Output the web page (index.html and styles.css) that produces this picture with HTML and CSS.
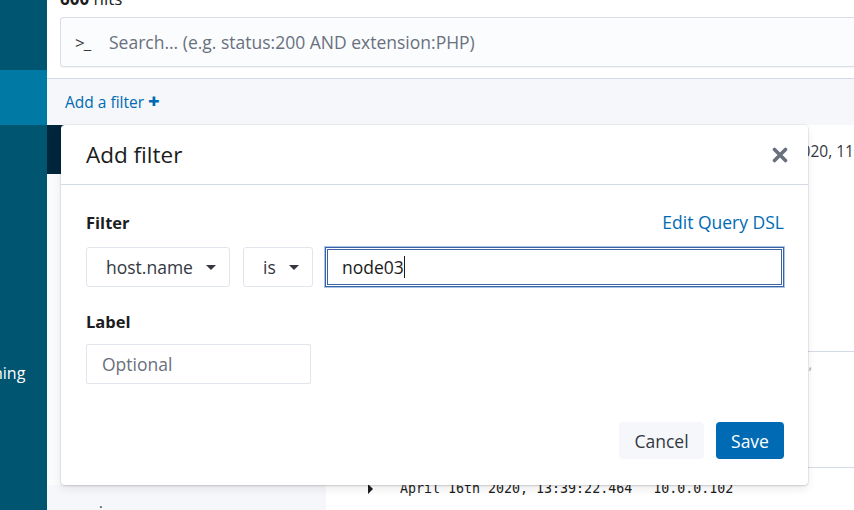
FILE: index.html
```html
<!DOCTYPE html>
<html lang="en">
<head>
<meta charset="utf-8">
<title>Discover - Add filter</title>
<link rel="stylesheet" href="styles.css">
</head>
<body>
<div class="app">
  <nav class="sidebar">
    <div class="nav-top"></div>
    <div class="nav-active"></div>
    <div class="nav-rest"><span class="nav-label">ning</span></div>
  </nav>
  <main class="main">
    <div class="hits"><b>600</b> hits</div>
    <div class="query-row">
      <div class="search">
        <span class="prompt">&gt;_</span>
        <span class="placeholder">Search... (e.g. status:200 AND extension:PHP)</span>
      </div>
    </div>
    <div class="filter-bar">
      <span class="add-filter">Add a filter <span class="plus">+</span></span>
    </div>
    <div class="content">
      <aside class="fields">
        <div class="index-header"></div>
        <div class="fields-body"></div>
        <div class="fields-bottom"><span class="dot">·</span></div>
      </aside>
      <section class="docs">
        <div class="doc-head"><span class="range">April 16th 2020, 11:</span></div>
        <div class="doc-chart"></div>
        <div class="doc-row row-a"><span class="tick">,</span></div>
        <div class="doc-row row-b">
          <span class="caret"></span>
          <span class="mono">April 16th 2020, 13:39:22.464</span>
          <span class="mono">10.0.0.102</span>
        </div>
      </section>
    </div>

    <div class="modal">
      <header class="modal-head">
        <h2 class="modal-title">Add filter</h2>
        <span class="close">
          <svg width="16" height="16" viewBox="0 0 16 16"><path d="M2.5 2.5 L13.5 13.5 M13.5 2.5 L2.5 13.5" stroke="#69707d" stroke-width="3.6" stroke-linecap="round"/></svg>
        </span>
      </header>
      <div class="modal-body">
        <div class="label-row">
          <span class="form-label">Filter</span>
          <span class="link">Edit Query DSL</span>
        </div>
        <div class="controls">
          <div class="select sel-field"><span>host.name</span><span class="tri"></span></div>
          <div class="select sel-op"><span>is</span><span class="tri"></span></div>
          <div class="value-input"><span>node03</span><span class="cursor"></span></div>
        </div>
        <div class="label-row second">
          <span class="form-label">Label</span>
        </div>
        <div class="optional">Optional</div>
        <div class="footer">
          <button class="btn cancel">Cancel</button>
          <button class="btn save">Save</button>
        </div>
      </div>
    </div>
  </main>
</div>
</body>
</html>
```
FILE: styles.css
```css
* { box-sizing: border-box; }
html, body { margin: 0; padding: 0; }
body {
  width: 854px;
  height: 510px;
  overflow: hidden;
  font-family: "Open Sans", "Noto Sans", sans-serif;
  color: #343741;
  background: #fff;
}
.app {
  display: grid;
  grid-template-columns: 47px 1fr;
  height: 510px;
}
.sidebar {
  display: flex;
  flex-direction: column;
  background: #005571;
  overflow: hidden;
}
.nav-top { height: 70px; background: #005571; }
.nav-active { height: 55px; background: #0079a5; }
.nav-rest { flex: 1; background: #005571; }
.nav-label {
  display: block;
  margin-top: 237px;
  margin-left: -7px;
  color: #fff;
  font-size: 16px;
  line-height: 22px;
}
.main {
  position: relative;
  display: flex;
  flex-direction: column;
  min-width: 0;
  overflow: hidden;
}
.hits {
  height: 30px;
  flex: none;
  margin-left: 13px;
  margin-top: -13px;
  font-size: 17px;
  line-height: 24px;
  color: #1a1c21;
}
.hits b { font-weight: 700; }
.query-row {
  height: 61px;
  flex: none;
  padding-left: 13px;
}
.search {
  height: 50px;
  margin-right: -4px;
  background: #fbfcfd;
  border: 1px solid #d9dde5;
  border-radius: 3px;
  display: flex;
  align-items: center;
  padding-left: 14px;
  box-shadow: 0 1px 1px rgba(0,0,0,0.04);
}
.prompt {
  font-size: 17px;
  color: #343741;
  width: 34px;
  letter-spacing: -1px;
}
.placeholder {
  font-size: 17.5px;
  color: #69707d;
  white-space: nowrap;
}
.filter-bar {
  height: 47px;
  flex: none;
  background: #f5f7fa;
  border-top: 1px solid #d3dae6;
  display: flex;
  align-items: center;
  padding-left: 18px;
}
.add-filter {
  color: #006bb4;
  font-size: 15.5px;
}
.plus {
  font-weight: 800;
  font-size: 20px;
  line-height: 1;
}
.content {
  flex: 1;
  display: grid;
  grid-template-columns: 279px 1fr;
}
.fields {
  display: flex;
  flex-direction: column;
  background: #fafbfd;
}
.index-header { height: 49px; background: #00263c; }
.fields-body { flex: 1; }
.fields-bottom {
  height: 25px;
  background: #f5f7fa;
  position: relative;
}
.dot { position: absolute; left: 52px; top: 12px; font-size: 14px; color: #343741; }
.docs {
  display: flex;
  flex-direction: column;
  background: #fff;
}
.doc-head {
  height: 50px;
  display: flex;
  align-items: center;
  justify-content: flex-end;
  padding-top: 2px;
  overflow: hidden;
}
.range {
  font-size: 15.5px;
  color: #343741;
  white-space: nowrap;
  margin-right: -4px;
}
.doc-chart { height: 177px; border-bottom: 1px solid #d3dae6; }
.doc-row.row-a {
  height: 116px;
  border-bottom: 1px solid #d3dae6;
  position: relative;
}
.tick { position: absolute; right: 42px; top: 2px; color: #98a2b3; font-size: 14px; }
.doc-row.row-b {
  flex: 1;
  display: flex;
  align-items: flex-start;
  padding-top: 12px;
  padding-left: 42px;
}
.caret {
  width: 0;
  height: 0;
  margin-top: 4px;
  margin-right: 27px;
  border-top: 5px solid transparent;
  border-bottom: 5px solid transparent;
  border-left: 5px solid #1a1c21;
}
.mono {
  font-family: "DejaVu Sans Mono", "Liberation Mono", monospace;
  font-size: 13.3px;
  line-height: 18px;
  color: #1a1c21;
  margin-right: 21px;
  white-space: nowrap;
}

/* Modal (overlay) */
.modal {
  position: absolute;
  left: 14px;
  top: 125px;
  width: 747px;
  height: 360px;
  background: #fff;
  border-radius: 4px;
  box-shadow: 0 1px 2px rgba(0,0,0,0.12), 0 4px 10px rgba(0,0,0,0.08), 0 0 0 1px rgba(0,0,0,0.04);
  display: flex;
  flex-direction: column;
}
.modal-head {
  height: 60px;
  border-bottom: 1px solid #d3dae6;
  display: flex;
  align-items: center;
  justify-content: space-between;
  padding: 0 20px 0 25px;
}
.modal-title {
  margin: 0;
  font-size: 22.5px;
  font-weight: 400;
  color: #1a1c21;
}
.close { display: flex; }
.modal-body {
  padding: 24px 24px 26px 25px;
  display: flex;
  flex-direction: column;
  flex: 1;
}
.label-row {
  display: flex;
  justify-content: space-between;
  align-items: center;
  height: 26px;
}
.label-row.second { margin-top: 21px; }
.form-label {
  font-weight: 700;
  font-size: 16.5px;
  color: #1a1c21;
}
.link {
  color: #006bb4;
  font-size: 17.5px;
}
.controls {
  display: flex;
  gap: 13px;
  margin-top: 12px;
  height: 40px;
}
.select {
  height: 40px;
  border: 1px solid #e1e5ec;
  border-radius: 3px;
  display: flex;
  align-items: center;
  justify-content: space-between;
  font-size: 17.5px;
  color: #343741;
  background: #fff;
}
.sel-field { width: 144px; padding: 0 13px 0 19px; }
.sel-op { width: 70px; padding: 0 13px 0 19px; }
.tri {
  width: 0; height: 0;
  border-left: 5px solid transparent;
  border-right: 5px solid transparent;
  border-top: 5px solid #343741;
}
.value-input {
  flex: 1;
  margin-left: -1px;
  height: 40px;
  border: 3px double #3b62a3;
  box-shadow: 0 0 0 1px #a9c6ea;
  display: flex;
  align-items: center;
  padding-left: 14px;
  font-size: 17.5px;
  color: #1a1c21;
}
.cursor {
  width: 1px;
  height: 22px;
  background: #1a1c21;
}
.optional {
  margin-top: 10px;
  width: 225px;
  height: 40px;
  border: 1px solid #e1e5ec;
  border-radius: 2px;
  display: flex;
  align-items: center;
  padding-left: 15px;
  font-size: 17.5px;
  color: #69707d;
}
.footer {
  margin-top: auto;
  display: flex;
  justify-content: flex-end;
  gap: 12px;
}
.btn {
  font-family: "Open Sans", "Noto Sans", sans-serif;
  font-size: 17.5px;
  height: 37px;
  border: none;
  border-radius: 4px;
  padding: 0;
}
.cancel { width: 85px; background: #f5f7fa; color: #343741; }
.save { width: 68px; background: #006bb4; color: #fff; }
```
